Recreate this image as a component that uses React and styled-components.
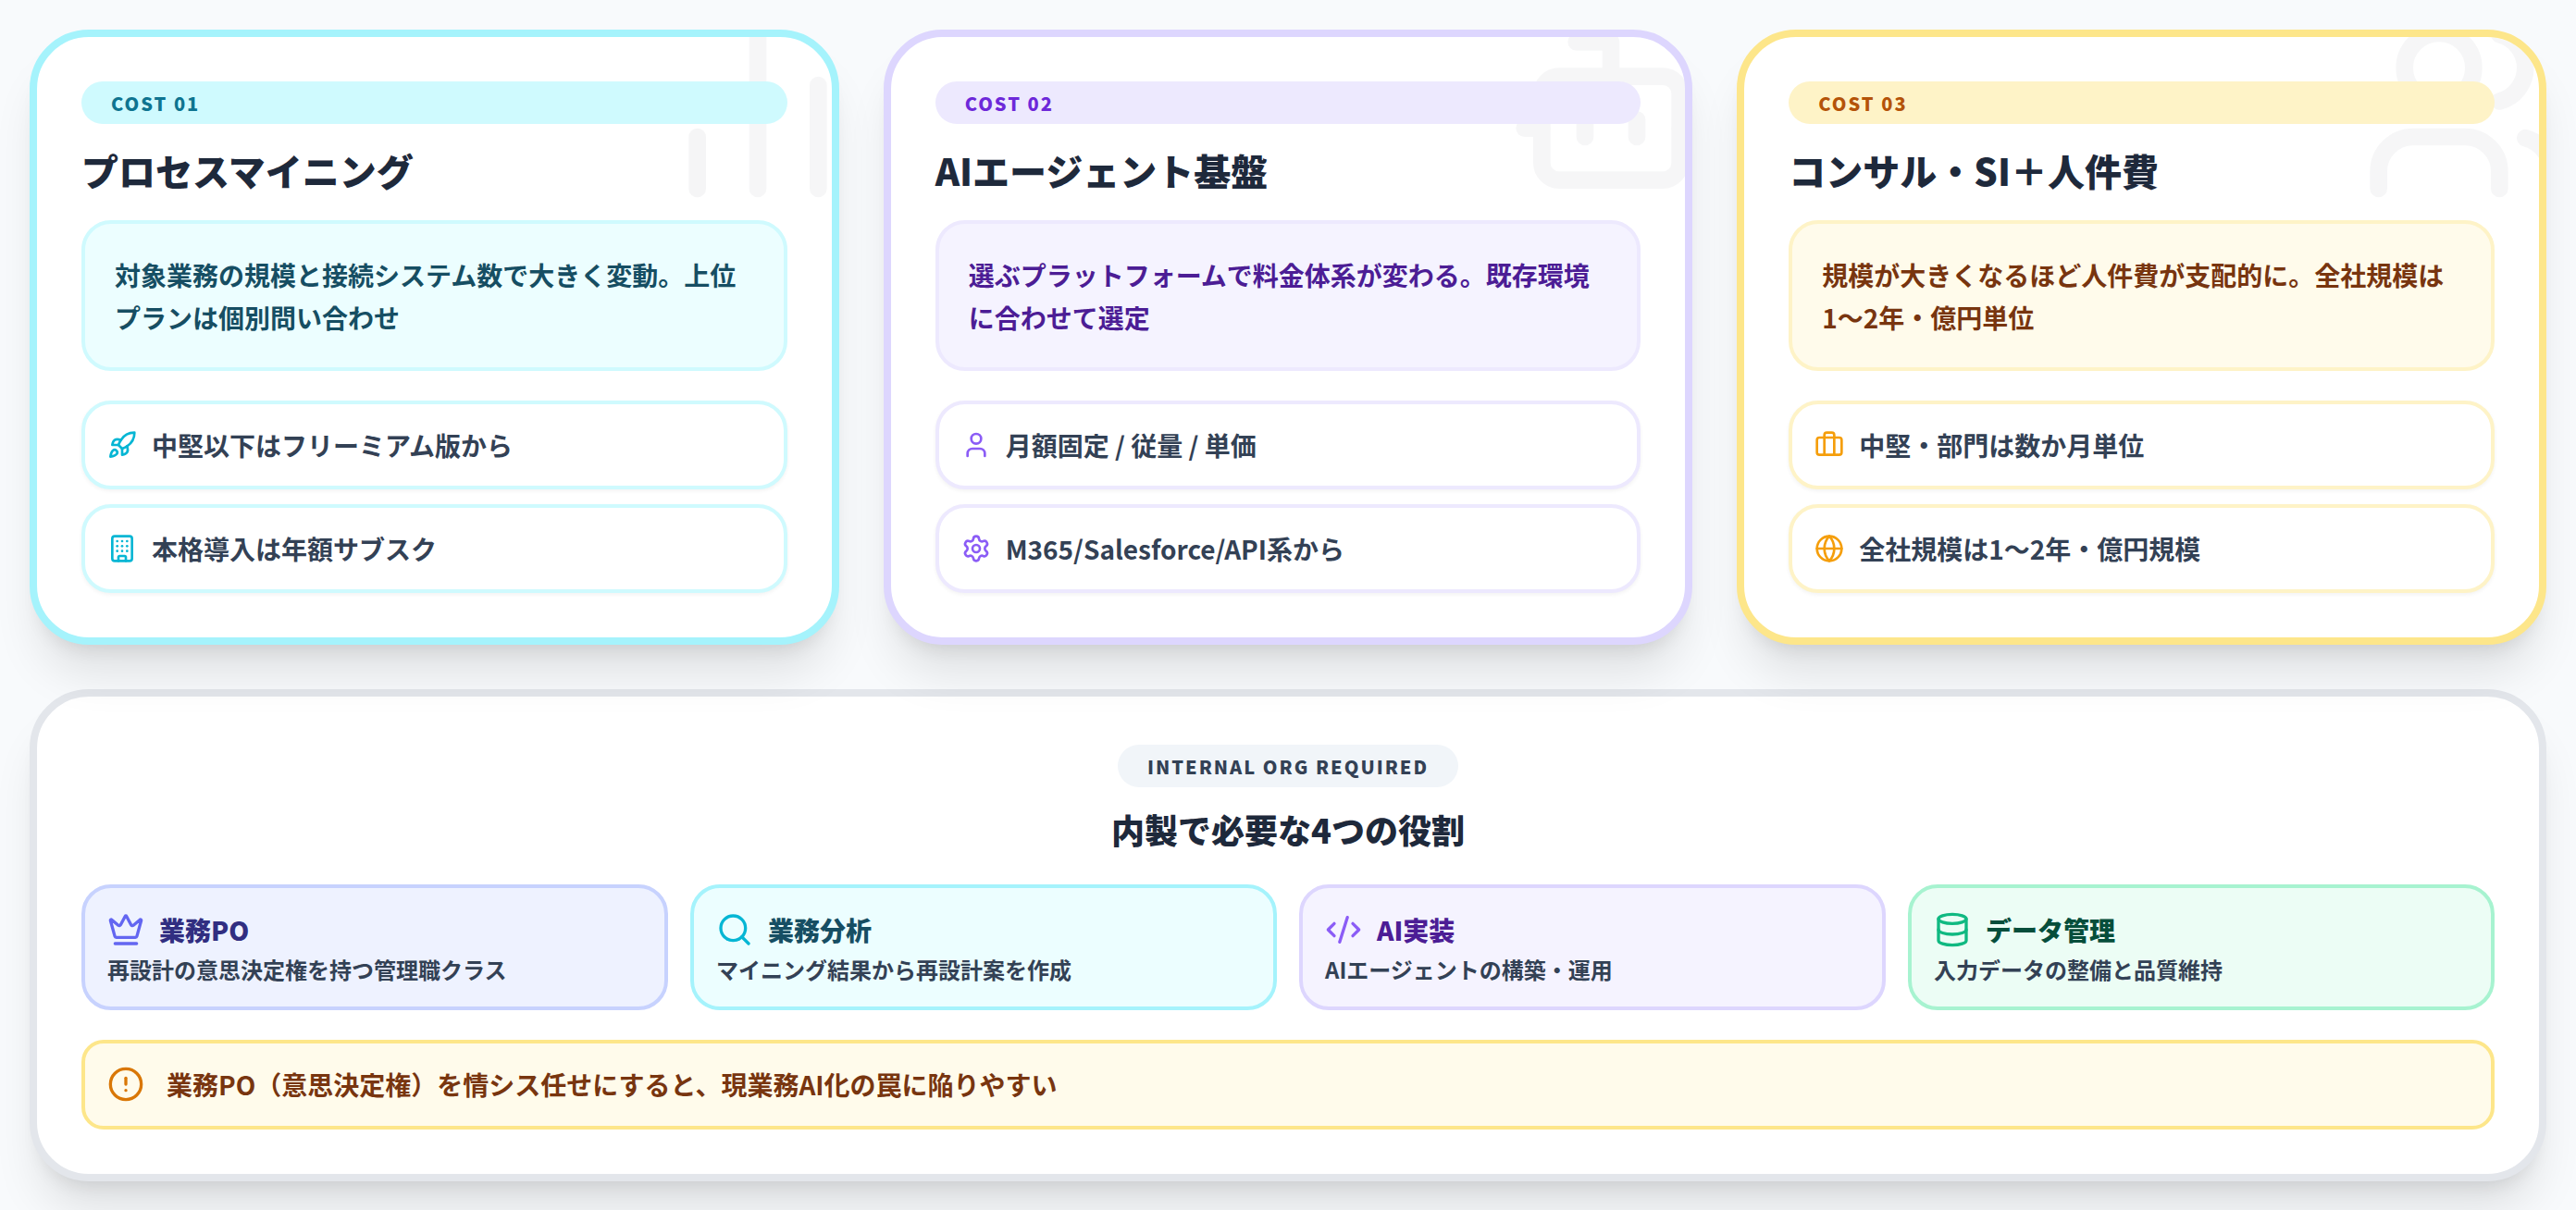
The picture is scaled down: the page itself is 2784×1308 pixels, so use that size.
import styled, { createGlobalStyle } from "styled-components";
import {
  Bot,
  Briefcase,
  Building,
  ChartNoAxesColumn,
  CircleAlert,
  CodeXml,
  Crown,
  Database,
  Globe,
  Rocket,
  Search,
  Settings,
  User,
  Users,
} from "lucide-react";

const GlobalStyle = createGlobalStyle`
  html, body {
    margin: 0;
    background: #f8fafc;
  }
  body {
    font-family: "Noto Sans CJK JP", "Noto Sans", sans-serif;
  }
  * {
    box-sizing: border-box;
  }
`;

const tones = {
  cyan: {
    border: "#a5f3fc",
    soft: "#cffafe",
    bg: "#ecfeff",
    label: "#0e7490",
    desc: "#164e63",
    icon: "#06b6d4",
  },
  violet: {
    border: "#ddd6fe",
    soft: "#ede9fe",
    bg: "#f5f3ff",
    label: "#6d28d9",
    desc: "#4c1d95",
    icon: "#8b5cf6",
  },
  amber: {
    border: "#fde68a",
    soft: "#fef3c7",
    bg: "#fffbeb",
    label: "#b45309",
    desc: "#78350f",
    icon: "#f59e0b",
  },
  indigo: { border: "#c7d2fe", bg: "#eef2ff", desc: "#312e81", icon: "#6366f1" },
  green: { border: "#a7f3d0", bg: "#ecfdf5", desc: "#064e3b", icon: "#10b981" },
};

const panelShadow = "0 40px 50px -10px rgba(0, 0, 0, 0.1), 0 16px 20px -12px rgba(0, 0, 0, 0.1)";

const Page = styled.div`
  display: flex;
  flex-direction: column;
  gap: 48px;
  padding: 32px;
  min-height: 100vh;
`;

const CardRow = styled.div`
  display: grid;
  grid-template-columns: repeat(3, 1fr);
  gap: 48px;
`;

const Card = styled.section`
  position: relative;
  overflow: hidden;
  display: flex;
  flex-direction: column;
  padding: 48px;
  background: #fff;
  border: 8px solid ${(p) => tones[p.$tone].border};
  border-radius: 64px;
  box-shadow: ${panelShadow};
`;

const Watermark = styled.div`
  position: absolute;
  top: -32px;
  right: -32px;
  color: #0f172a;
  opacity: 0.035;
  line-height: 0;
`;

const CostPill = styled.div`
  position: relative;
  height: 46px;
  padding: 0 32px;
  background: ${(p) => tones[p.$tone].soft};
  color: ${(p) => tones[p.$tone].label};
  border-radius: 999px;
  font-size: 20px;
  line-height: 48px;
  font-weight: 800;
  letter-spacing: 2px;
`;

const CardTitle = styled.h2`
  position: relative;
  margin: 22px 0 26px;
  color: #1e293b;
  font-size: 40px;
  line-height: 56px;
  font-weight: 900;
`;

const Desc = styled.p`
  position: relative;
  margin: 0 0 32px;
  padding: 33px 32px 31px;
  background: ${(p) => tones[p.$tone].bg};
  border: 4px solid ${(p) => tones[p.$tone].soft};
  border-radius: 32px;
  color: ${(p) => tones[p.$tone].desc};
  font-size: 28px;
  line-height: 45.5px;
  font-weight: 700;
`;

const ItemList = styled.div`
  position: relative;
  display: flex;
  flex-direction: column;
  gap: 16px;
`;

const Item = styled.div`
  display: flex;
  align-items: center;
  gap: 16px;
  min-height: 96px;
  padding: 0 24px;
  background: #fff;
  border: 4px solid ${(p) => tones[p.$tone].soft};
  border-radius: 32px;
  box-shadow: 0 2px 4px rgba(0, 0, 0, 0.05);
  color: #334155;
  font-size: 28px;
  font-weight: 700;

  svg {
    flex: none;
    color: ${(p) => tones[p.$tone].icon};
  }
`;

const Panel = styled.section`
  display: flex;
  flex-direction: column;
  padding: 52px 48px 48px;
  background: #fff;
  border: 8px solid #e3e6eb;
  border-radius: 64px;
  box-shadow: ${panelShadow};
`;

const PanelHead = styled.header`
  display: flex;
  flex-direction: column;
  align-items: center;
  gap: 20px;
  margin-bottom: 35px;
`;

const OrgPill = styled.div`
  height: 46px;
  padding: 0 32px;
  background: #f1f5f9;
  border-radius: 999px;
  color: #334155;
  font-size: 20px;
  line-height: 47px;
  font-weight: 800;
  letter-spacing: 2px;
`;

const PanelTitle = styled.h2`
  margin: 0;
  color: #1e293b;
  font-size: 36px;
  line-height: 50px;
  font-weight: 900;
`;

const RoleGrid = styled.div`
  display: grid;
  grid-template-columns: repeat(4, 1fr);
  gap: 24px;
  margin-bottom: 32px;
`;

const Role = styled.div`
  padding: 23px 24px 22px;
  background: ${(p) => tones[p.$tone].bg};
  border: 4px solid ${(p) => tones[p.$tone].border};
  border-radius: 32px;
`;

const RoleHead = styled.div`
  display: flex;
  align-items: center;
  gap: 16px;
  color: ${(p) => tones[p.$tone].desc};
  font-size: 28px;
  line-height: 44px;
  font-weight: 900;

  svg {
    flex: none;
    color: ${(p) => tones[p.$tone].icon};
  }
`;

const RoleText = styled.div`
  margin-top: 3px;
  color: #334155;
  font-size: 24px;
  line-height: 36px;
  font-weight: 700;
`;

const Warning = styled.div`
  display: flex;
  align-items: center;
  gap: 24px;
  padding: 22px 24px;
  background: #fffbeb;
  border: 4px solid #fde68a;
  border-radius: 24px;
  color: #78350f;
  font-size: 28px;
  line-height: 44.8px;
  font-weight: 700;

  svg {
    flex: none;
    color: #d97706;
  }
`;

const costs = [
  {
    tone: "cyan",
    label: "COST 01",
    title: "プロセスマイニング",
    desc: "対象業務の規模と接続システム数で大きく変動。上位プランは個別問い合わせ",
    mark: ChartNoAxesColumn,
    items: [
      { icon: Rocket, text: "中堅以下はフリーミアム版から" },
      { icon: Building, text: "本格導入は年額サブスク" },
    ],
  },
  {
    tone: "violet",
    label: "COST 02",
    title: "AIエージェント基盤",
    desc: "選ぶプラットフォームで料金体系が変わる。既存環境に合わせて選定",
    mark: Bot,
    items: [
      { icon: User, text: "月額固定 / 従量 / 単価" },
      { icon: Settings, text: "M365/Salesforce/API系から" },
    ],
  },
  {
    tone: "amber",
    label: "COST 03",
    title: "コンサル・SI＋人件費",
    desc: "規模が大きくなるほど人件費が支配的に。全社規模は1〜2年・億円単位",
    mark: Users,
    items: [
      { icon: Briefcase, text: "中堅・部門は数か月単位" },
      { icon: Globe, text: "全社規模は1〜2年・億円規模" },
    ],
  },
];

const roles = [
  { tone: "indigo", icon: Crown, title: "業務PO", text: "再設計の意思決定権を持つ管理職クラス" },
  { tone: "cyan", icon: Search, title: "業務分析", text: "マイニング結果から再設計案を作成" },
  { tone: "violet", icon: CodeXml, title: "AI実装", text: "AIエージェントの構築・運用" },
  { tone: "green", icon: Database, title: "データ管理", text: "入力データの整備と品質維持" },
];

const App = () => {
  return (
    <>
      <GlobalStyle />
      <Page>
        <CardRow>
          {costs.map((cost) => (
            <Card key={cost.label} $tone={cost.tone}>
              <Watermark>
                <cost.mark size={224} />
              </Watermark>
              <CostPill $tone={cost.tone}>{cost.label}</CostPill>
              <CardTitle>{cost.title}</CardTitle>
              <Desc $tone={cost.tone}>{cost.desc}</Desc>
              <ItemList>
                {cost.items.map((item) => (
                  <Item key={item.text} $tone={cost.tone}>
                    <item.icon size={32} />
                    {item.text}
                  </Item>
                ))}
              </ItemList>
            </Card>
          ))}
        </CardRow>
        <Panel>
          <PanelHead>
            <OrgPill>INTERNAL ORG REQUIRED</OrgPill>
            <PanelTitle>内製で必要な4つの役割</PanelTitle>
          </PanelHead>
          <RoleGrid>
            {roles.map((role) => (
              <Role key={role.title} $tone={role.tone}>
                <RoleHead $tone={role.tone}>
                  <role.icon size={40} />
                  {role.title}
                </RoleHead>
                <RoleText>{role.text}</RoleText>
              </Role>
            ))}
          </RoleGrid>
          <Warning>
            <CircleAlert size={40} />
            業務PO（意思決定権）を情シス任せにすると、現業務AI化の罠に陥りやすい
          </Warning>
        </Panel>
      </Page>
    </>
  );
};

export default App;
